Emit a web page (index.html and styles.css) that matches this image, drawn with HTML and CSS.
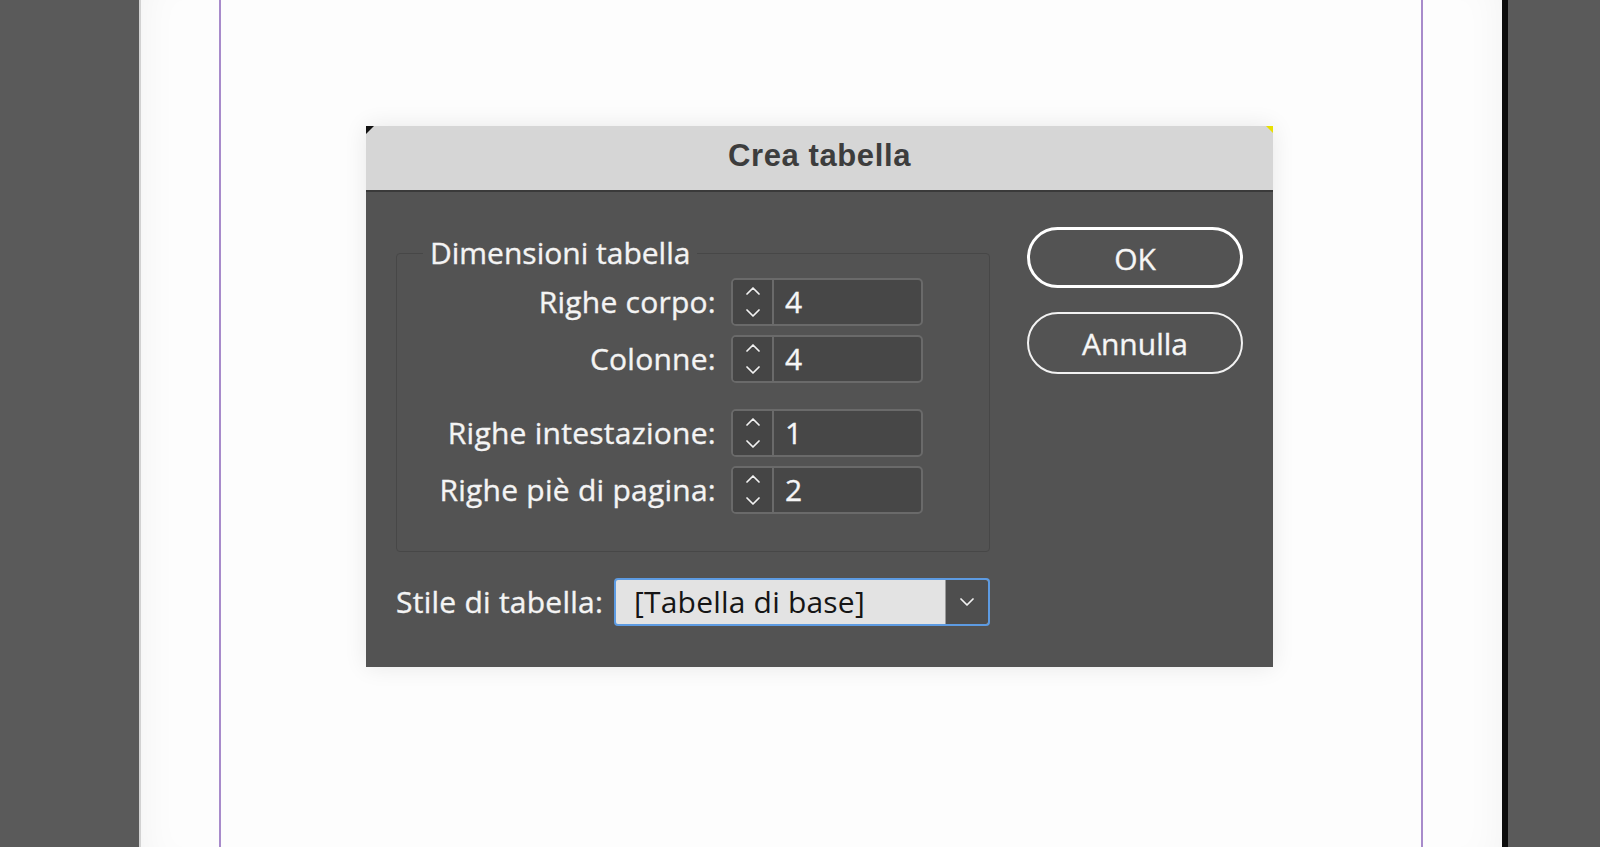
FILE: index.html
```html
<!DOCTYPE html>
<html lang="it">
<head>
<meta charset="utf-8">
<title>Crea tabella</title>
<link rel="stylesheet" href="styles.css">
</head>
<body>
  <div class="workspace">
    <div class="gutter"></div>
    <div class="page">
      <div class="guides"></div>
    </div>
    <div class="gutter gutter-right"></div>
  </div>

  <div class="dialog" role="dialog" aria-labelledby="dlg-title">
    <div class="titlebar">
      <h1 id="dlg-title" class="title">Crea tabella</h1>
    </div>
    <div class="dialog-body">
      <div class="form-col">
        <fieldset class="group">
          <legend class="group-legend">Dimensioni tabella</legend>
          <div class="rows">
            <label class="row-label">Righe corpo:</label>
            <div class="spinner">
              <div class="stepper">
                <svg class="chev" viewBox="0 0 14 8" width="14" height="8"><polyline points="1,7 7,1 13,7"/></svg>
                <svg class="chev" viewBox="0 0 14 8" width="14" height="8"><polyline points="1,1 7,7 13,1"/></svg>
              </div>
              <span class="value">4</span>
            </div>

            <label class="row-label">Colonne:</label>
            <div class="spinner">
              <div class="stepper">
                <svg class="chev" viewBox="0 0 14 8" width="14" height="8"><polyline points="1,7 7,1 13,7"/></svg>
                <svg class="chev" viewBox="0 0 14 8" width="14" height="8"><polyline points="1,1 7,7 13,1"/></svg>
              </div>
              <span class="value">4</span>
            </div>

            <div class="spacer"></div>

            <label class="row-label">Righe intestazione:</label>
            <div class="spinner">
              <div class="stepper">
                <svg class="chev" viewBox="0 0 14 8" width="14" height="8"><polyline points="1,7 7,1 13,7"/></svg>
                <svg class="chev" viewBox="0 0 14 8" width="14" height="8"><polyline points="1,1 7,7 13,1"/></svg>
              </div>
              <span class="value">1</span>
            </div>

            <label class="row-label">Righe piè di pagina:</label>
            <div class="spinner">
              <div class="stepper">
                <svg class="chev" viewBox="0 0 14 8" width="14" height="8"><polyline points="1,7 7,1 13,7"/></svg>
                <svg class="chev" viewBox="0 0 14 8" width="14" height="8"><polyline points="1,1 7,7 13,1"/></svg>
              </div>
              <span class="value">2</span>
            </div>
          </div>
        </fieldset>

        <div class="style-row">
          <span class="style-label">Stile di tabella:</span>
          <div class="select">
            <span class="select-value">[Tabella di base]</span>
            <span class="select-btn">
              <svg class="chev" viewBox="0 0 14 8" width="14" height="8"><polyline points="1,1 7,7 13,1"/></svg>
            </span>
          </div>
        </div>
      </div>

      <div class="btn-col">
        <button class="btn btn-default">OK</button>
        <button class="btn">Annulla</button>
      </div>
    </div>
  </div>
</body>
</html>
```

FILE: styles.css
```css
* { box-sizing: border-box; }

html, body {
  margin: 0;
  padding: 0;
}

body {
  position: relative;
  width: 1600px;
  height: 847px;
  overflow: hidden;
  background: #5a5a5a;
  font-family: "Open Sans", "DejaVu Sans", sans-serif;
}

.workspace {
  display: flex;
  height: 100%;
}

.gutter {
  width: 139px;
  background: #5a5a5a;
  flex: none;
}

.gutter-right {
  flex: 1;
}

.page {
  width: 1369px;
  flex: none;
  background: #fdfdfd;
  border-left: 2px solid #d2d2d2;
  border-right: 6px solid #0c0c0c;
  box-shadow: inset 30px 0 40px -30px rgba(0, 0, 0, 0.05), inset -30px 0 40px -30px rgba(0, 0, 0, 0.05);
  padding: 0 79px 0 78px;
}

.guides {
  height: 100%;
  border-left: 2px solid #a88bcb;
  border-right: 2px solid #a88bcb;
}

/* dialog overlays the page */
.dialog {
  position: absolute;
  left: 366px;
  top: 126px;
  width: 907px;
  height: 541px;
  display: flex;
  flex-direction: column;
  background: #535353;
  box-shadow: 0 0 22px rgba(0, 0, 0, 0.09);
}

.dialog::before {
  content: "";
  position: absolute;
  left: 0;
  top: 0;
  border-top: 8px solid #111;
  border-right: 8px solid transparent;
}

.dialog::after {
  content: "";
  position: absolute;
  right: 0;
  top: 0;
  border-top: 7px solid #e8e000;
  border-left: 7px solid transparent;
}

.titlebar {
  height: 66px;
  flex: none;
  background: #d6d6d6;
  border-bottom: 2px solid #3a3a3a;
}

.title {
  margin: 0;
  text-align: center;
  font-family: "Liberation Sans", Arial, sans-serif;
  font-weight: bold;
  font-size: 31px;
  letter-spacing: 0.6px;
  line-height: 59px;
  color: #3d3d3d;
}

.dialog-body {
  flex: 1;
  display: flex;
  gap: 37px;
  padding: 35px 30px 0 30px;
}

.form-col {
  width: 594px;
  flex: none;
  padding-top: 8px;
}

.group {
  margin: 0;
  padding: 7px 66px 37px 0;
  border: 1px solid #474747;
  border-radius: 4px;
  min-width: 0;
}

.group-legend {
  margin-left: 26px;
  padding: 0 7px;
  font-size: 30px;
  line-height: 36px;
  color: #f4f4f4;
  -webkit-text-stroke: 0.35px #f4f4f4;
}

.rows {
  display: grid;
  grid-template-columns: auto 192px;
  grid-template-rows: 48px 48px 8px 48px 48px;
  justify-content: end;
  column-gap: 15px;
  row-gap: 9px;
}

.spacer {
  grid-column: 1 / 3;
}

.row-label {
  font-size: 30px;
  line-height: 48px;
  letter-spacing: 0.25px;
  color: #f4f4f4;
  -webkit-text-stroke: 0.35px #f4f4f4;
  text-align: right;
  white-space: nowrap;
}

.spinner {
  display: flex;
  height: 48px;
  border: 2px solid #6a6a6a;
  border-radius: 5px;
  background: #474747;
  overflow: hidden;
}

.stepper {
  width: 41px;
  flex: none;
  border-right: 2px solid #6a6a6a;
  background: #454545;
  display: flex;
  flex-direction: column;
  align-items: center;
  justify-content: center;
  gap: 14px;
}

.chev {
  display: block;
  fill: none;
  stroke: #f2f2f2;
  stroke-width: 1.7;
  stroke-linecap: round;
  stroke-linejoin: round;
}

.value {
  padding-left: 11px;
  font-size: 30px;
  line-height: 44px;
  color: #f6f6f6;
  -webkit-text-stroke: 0.35px #f6f6f6;
}

.style-row {
  margin-top: 26px;
  display: flex;
  align-items: center;
  justify-content: space-between;
}

.style-label {
  font-size: 30px;
  line-height: 48px;
  letter-spacing: 0.25px;
  color: #f4f4f4;
  -webkit-text-stroke: 0.35px #f4f4f4;
  white-space: nowrap;
}

.select {
  width: 376px;
  height: 48px;
  display: flex;
  border: 2px solid #5d9be2;
  border-radius: 4px;
  background: #e3e3e3;
  overflow: hidden;
}

.select-value {
  flex: 1;
  padding-left: 18px;
  font-size: 30px;
  line-height: 44px;
  letter-spacing: 0.2px;
  color: #151515;
  white-space: nowrap;
}

.select-btn {
  width: 43px;
  flex: none;
  background: #4e4e4e;
  border-left: 1px solid #9a9a9a;
  display: flex;
  align-items: center;
  justify-content: center;
}

.btn-col {
  width: 216px;
  flex: none;
  display: flex;
  flex-direction: column;
  gap: 24px;
}

.btn {
  height: 62px;
  border: 2px solid #f2f2f2;
  border-radius: 31px;
  background: transparent;
  color: #f6f6f6;
  font-family: "Open Sans", "DejaVu Sans", sans-serif;
  font-size: 30px;
  line-height: 1;
  padding: 2px 0 0 0;
  -webkit-text-stroke: 0.35px #f6f6f6;
}

.btn-default {
  height: 61px;
  border-width: 3px;
  border-color: #ffffff;
}
```
